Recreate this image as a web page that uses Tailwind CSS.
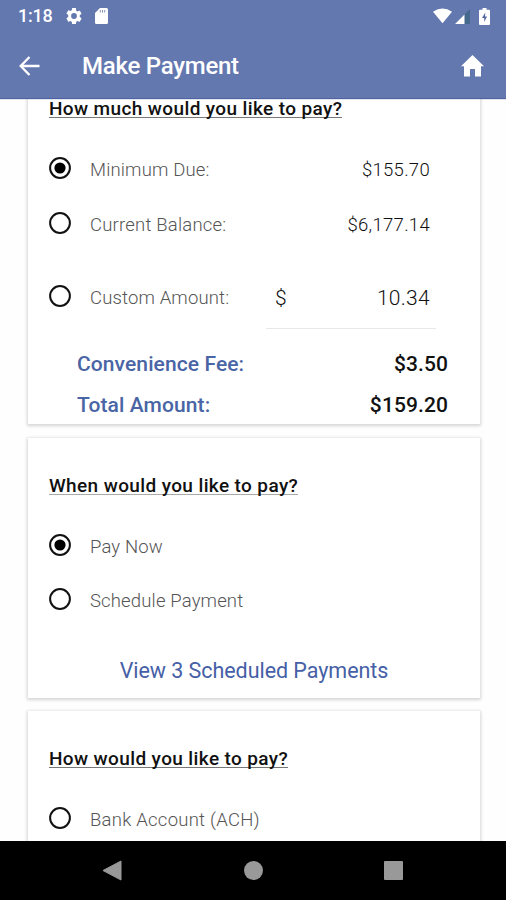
<!DOCTYPE html>
<html lang="en">
<head>
<meta charset="utf-8">
<title>Make Payment</title>
<script src="https://cdn.jsdelivr.net/npm/@tailwindcss/browser@4"></script>
</head>
<body class="bg-white">
<div class="flex h-[900px] w-[506px] flex-col overflow-hidden bg-[#fefefe] font-['Roboto','Liberation_Sans',sans-serif] text-[#111]">
  <header class="z-10 flex h-[98px] shrink-0 flex-col bg-[#6478b0] text-white shadow-[0_1px_1px_#5063a0]">
    <div class="flex h-8 items-center pl-[18px] pr-[16px]">
      <span class="w-[48px] text-[18px] font-medium leading-8 tracking-[-0.2px]">1:18</span>
      <svg class="h-4 w-4" viewBox="2 2 20 20" fill="#fff"><path d="M19.14 12.94c.04-.3.06-.61.06-.94s-.02-.64-.07-.94l2.03-1.58a.49.49 0 0 0 .12-.61l-1.92-3.32a.49.49 0 0 0-.59-.22l-2.39.96a7 7 0 0 0-1.62-.94l-.36-2.54A.48.48 0 0 0 13.92 2h-3.84a.48.48 0 0 0-.48.41l-.36 2.54a7 7 0 0 0-1.62.94l-2.39-.96a.49.49 0 0 0-.59.22L2.72 8.47a.49.49 0 0 0 .12.61l2.03 1.58a7 7 0 0 0 0 2.28l-2.03 1.98a.49.49 0 0 0-.12.61l1.92 3.32c.12.22.37.29.59.22l2.39-.96c.5.38 1.03.7 1.62.94l.36 2.54c.05.24.24.41.48.41h3.84c.24 0 .44-.17.48-.41l.36-2.54a7 7 0 0 0 1.62-.94l2.39.96c.22.08.47 0 .59-.22l1.92-3.32a.49.49 0 0 0-.12-.61zM12 15.6a3.6 3.6 0 1 1 0-7.2 3.6 3.6 0 0 1 0 7.2z"/></svg>
      <svg class="ml-[13px] h-4 w-[13px]" viewBox="0 0 13 16"><path d="M5 0h6.500Q13 0 13 1.500V14.500Q13 16 11.500 16H1.500Q0 16 0 14.500V5z" fill="#fff"/><path d="M5.300 2v2.500M7.500 2v2.500M9.700 2v2.500" stroke="#8494c0" stroke-width="1"/></svg>
      <svg class="ml-auto h-4 w-[19px]" viewBox="0 0 20 16"><path d="M0 3.500Q10-3.500 20 3.500L10 15.500z" fill="#fff"/></svg>
      <svg class="ml-[3px] h-4 w-[15px]" viewBox="0 0 15 16"><path d="M15 1v15H0z" fill="#45688d"/><path d="M9.500 6.500V16H0z" fill="#fff"/></svg>
      <svg class="ml-[9px] h-[17px] w-[11px]" viewBox="0 0 11 17"><path d="M3.500 0h4v1.700H10q1 0 1 1V16q0 1-1 1H1q-1 0-1-1V2.700q0-1 1-1h2.500z" fill="#fff"/><path d="M6.300 4.500L3 10h2.200v4L8 8.500H6z" fill="#5468a4"/></svg>
    </div>
    <div class="flex h-[66px] items-center pl-[19px] pr-[22px] pt-[1px]">
      <svg class="h-5 w-[21px]" viewBox="0 0 21 20" fill="none" stroke="#fff" stroke-width="2.300"><path d="M20.500 10H2M10.500 1L1.700 10l8.800 9"/></svg>
      <h1 class="ml-[42px] text-[24px] font-medium leading-8 tracking-[-0.25px]">Make Payment</h1>
      <svg class="ml-auto h-[22px] w-[23px]" viewBox="0 0 23 22"><path d="M11.500 0L0 11.200h3V21.500h6V14h5v7.500h6V11.200h3z" fill="#fff"/></svg>
    </div>
  </header>

  <main class="flex h-[743px] shrink-0 flex-col overflow-hidden px-7">
    <section class="h-[326px] w-[452px] shrink-0 bg-white pl-[21px] shadow-[0_1px_3px_1px_#d6d6d6]">
      <h2 class="h-[45px] text-[19px] font-medium leading-[22px]"><span class="inline-block h-[20px] border-b border-[#777] tracking-[0.38px]">How much would you like to pay?</span></h2>
      <label class="flex h-[55px] items-center pr-[50px] pb-[1px]">
        <svg class="mb-[4px] h-[22px] w-[22px]" viewBox="0 0 22 22"><circle cx="11" cy="11" r="9.900" fill="none" stroke="#111" stroke-width="2"/><circle cx="11" cy="11" r="5.600" fill="#000"/></svg>
        <span class="ml-[19px] pt-[2px] text-[18.500px] font-light tracking-[0.15px] text-[#555]">Minimum Due:</span>
        <span class="ml-auto pt-[2px] text-[18.500px] font-[350] tracking-[0.3px]">$155.70</span>
      </label>
      <label class="flex h-[55px] items-center pr-[50px] pb-[1px]">
        <svg class="mb-[4px] h-[22px] w-[22px]" viewBox="0 0 22 22"><circle cx="11" cy="11" r="9.900" fill="none" stroke="#111" stroke-width="2"/></svg>
        <span class="ml-[19px] pt-[2px] text-[18.500px] font-light tracking-[0.2px] text-[#555]">Current Balance:</span>
        <span class="ml-auto pt-[2px] text-[18.500px] font-[350] tracking-[0.3px]">$6,177.14</span>
      </label>
      <label class="mt-[12px] flex h-[64px] items-center pr-[44px]">
        <svg class="mb-[3px] h-[22px] w-[22px]" viewBox="0 0 22 22"><circle cx="11" cy="11" r="9.900" fill="none" stroke="#111" stroke-width="2"/></svg>
        <span class="ml-[19px] pt-[4px] text-[18.500px] font-light tracking-[0.15px] text-[#555]">Custom Amount:</span>
        <span class="ml-auto flex h-16 w-[170px] items-center justify-between border-b border-[#e8e8e8] pl-[9px] pr-[6px] pt-[4px] text-[21px] tracking-[0.3px]"><span class="font-[350]">$</span><span class="font-light">10.34</span></span>
      </label>
      <div class="mt-[16px] flex h-10 items-center justify-between pl-7 pr-[32px] text-[21px] font-medium tracking-[0.1px]"><span class="text-[#4965a5]">Convenience Fee:</span><span>$3.50</span></div>
      <div class="flex h-10 items-center justify-between pl-7 pr-[32px] pt-[1px] text-[21px] font-medium tracking-[0.1px]"><span class="text-[#4965a5]">Total Amount:</span><span>$159.20</span></div>
    </section>

    <section class="mt-[14px] h-[260px] w-[452px] shrink-0 bg-white pl-[21px] pt-[37px] shadow-[0_1px_3px_1px_#d6d6d6]">
      <h2 class="h-[45px] text-[19px] font-medium leading-[22px]"><span class="inline-block h-[20px] border-b border-[#aaa] tracking-[0.38px]">When would you like to pay?</span></h2>
      <label class="flex h-[54px] items-center pb-[1px]">
        <svg class="mb-[4px] h-[22px] w-[22px]" viewBox="0 0 22 22"><circle cx="11" cy="11" r="9.900" fill="none" stroke="#111" stroke-width="2"/><circle cx="11" cy="11" r="5.600" fill="#000"/></svg>
        <span class="ml-[19px] pt-[2px] text-[18.500px] font-light tracking-[0.15px] text-[#555]">Pay Now</span>
      </label>
      <label class="flex h-[55px] items-center pb-[1px]">
        <svg class="mb-[4px] h-[22px] w-[22px]" viewBox="0 0 22 22"><circle cx="11" cy="11" r="9.900" fill="none" stroke="#111" stroke-width="2"/></svg>
        <span class="ml-[19px] pt-[2px] text-[18.500px] font-light tracking-[0.15px] text-[#555]">Schedule Payment</span>
      </label>
      <a class="mt-[22px] flex h-10 items-center justify-center pr-[21px] text-[21.500px] tracking-[-0.05px] text-[#4560a6]">View 3 Scheduled Payments</a>
    </section>

    <section class="mt-[13px] h-[200px] w-[452px] shrink-0 bg-white pl-[21px] pt-[37px] shadow-[0_1px_3px_1px_#d6d6d6]">
      <h2 class="h-[45px] text-[19px] font-medium leading-[22px]"><span class="inline-block h-[20px] border-b border-[#777] tracking-[0.38px]">How would you like to pay?</span></h2>
      <label class="flex h-[54px] items-center pb-[1px]">
        <svg class="mb-[4px] h-[22px] w-[22px]" viewBox="0 0 22 22"><circle cx="11" cy="11" r="9.900" fill="none" stroke="#111" stroke-width="2"/></svg>
        <span class="ml-[19px] pt-[2px] text-[18.500px] font-light tracking-[0.25px] text-[#555]">Bank Account (ACH)</span>
      </label>
    </section>
  </main>

  <nav class="z-10 flex h-[59px] shrink-0 items-center bg-black pl-[102px]">
    <svg class="h-[21px] w-[20px]" viewBox="0 0 20 21"><path d="M1 10.500L19 1v19z" fill="#999" stroke="#999" stroke-linejoin="round"/></svg>
    <span class="ml-[122px] h-[19px] w-[19px] rounded-full bg-[#999]"></span>
    <span class="ml-[121px] h-[19px] w-[19px] rounded-[1px] bg-[#999]"></span>
  </nav>
</div>
</body>
</html>
